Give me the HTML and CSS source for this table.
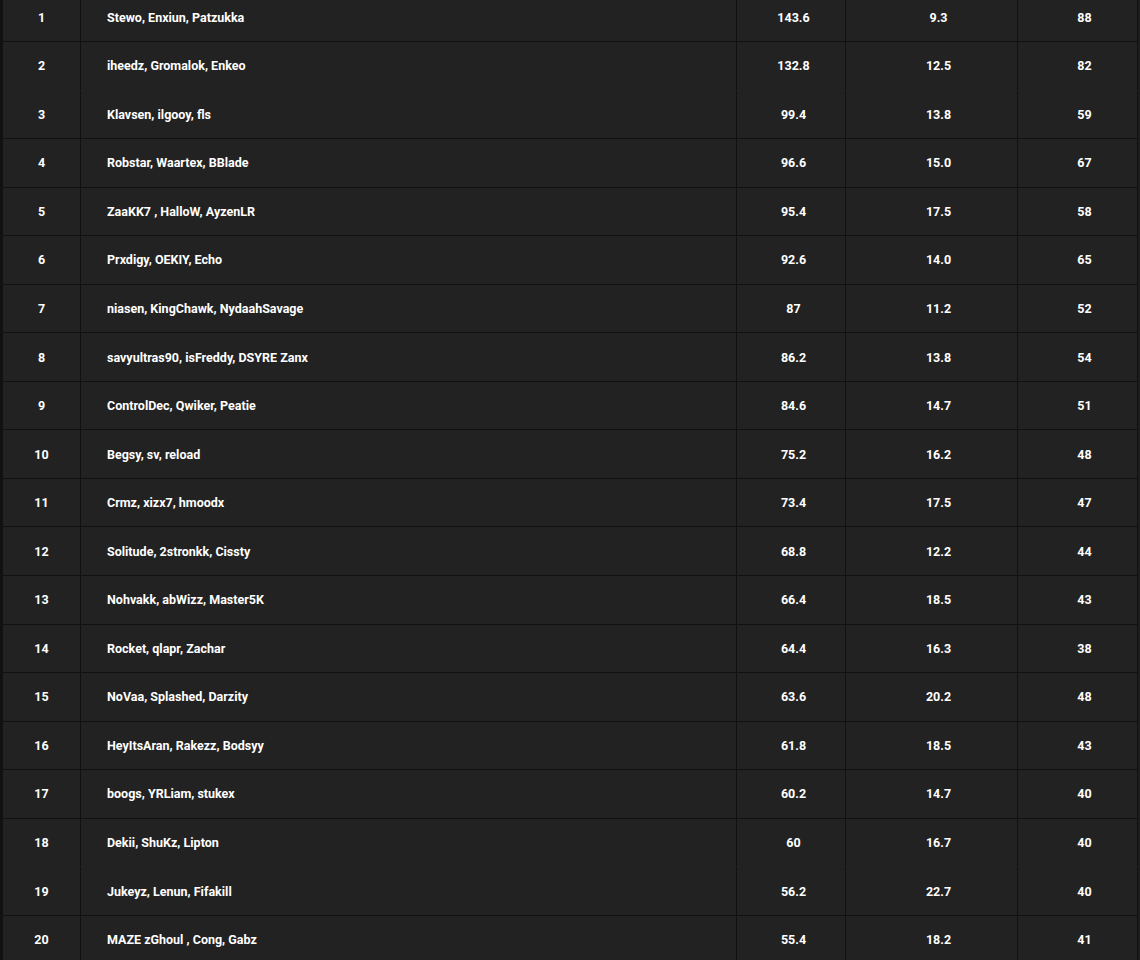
FILE: index.html
```html
<!DOCTYPE html>
<html>
<head>
<meta charset="utf-8">
<link rel="stylesheet" href="styles.css">
</head>
<body>
<div class="board">
  <div class="row"><div class="c rank">1</div><div class="c team">Stewo, Enxiun, Patzukka</div><div class="c pts">143.6</div><div class="c avg">9.3</div><div class="c elim">88</div></div>
  <div class="row noline"><div class="c rank">2</div><div class="c team">iheedz, Gromalok, Enkeo</div><div class="c pts">132.8</div><div class="c avg">12.5</div><div class="c elim">82</div></div>
  <div class="row"><div class="c rank">3</div><div class="c team">Klavsen, ilgooy, fls</div><div class="c pts">99.4</div><div class="c avg">13.8</div><div class="c elim">59</div></div>
  <div class="row"><div class="c rank">4</div><div class="c team">Robstar, Waartex, BBlade</div><div class="c pts">96.6</div><div class="c avg">15.0</div><div class="c elim">67</div></div>
  <div class="row"><div class="c rank">5</div><div class="c team">ZaaKK7 , HalloW, AyzenLR</div><div class="c pts">95.4</div><div class="c avg">17.5</div><div class="c elim">58</div></div>
  <div class="row"><div class="c rank">6</div><div class="c team">Prxdigy, OEKIY, Echo</div><div class="c pts">92.6</div><div class="c avg">14.0</div><div class="c elim">65</div></div>
  <div class="row"><div class="c rank">7</div><div class="c team">niasen, KingChawk, NydaahSavage</div><div class="c pts">87</div><div class="c avg">11.2</div><div class="c elim">52</div></div>
  <div class="row"><div class="c rank">8</div><div class="c team">savyultras90, isFreddy, DSYRE Zanx</div><div class="c pts">86.2</div><div class="c avg">13.8</div><div class="c elim">54</div></div>
  <div class="row"><div class="c rank">9</div><div class="c team">ControlDec, Qwiker, Peatie</div><div class="c pts">84.6</div><div class="c avg">14.7</div><div class="c elim">51</div></div>
  <div class="row"><div class="c rank">10</div><div class="c team">Begsy, sv, reload</div><div class="c pts">75.2</div><div class="c avg">16.2</div><div class="c elim">48</div></div>
  <div class="row"><div class="c rank">11</div><div class="c team">Crmz, xizx7, hmoodx</div><div class="c pts">73.4</div><div class="c avg">17.5</div><div class="c elim">47</div></div>
  <div class="row"><div class="c rank">12</div><div class="c team">Solitude, 2stronkk, Cissty</div><div class="c pts">68.8</div><div class="c avg">12.2</div><div class="c elim">44</div></div>
  <div class="row"><div class="c rank">13</div><div class="c team">Nohvakk, abWizz, Master5K</div><div class="c pts">66.4</div><div class="c avg">18.5</div><div class="c elim">43</div></div>
  <div class="row"><div class="c rank">14</div><div class="c team">Rocket, qlapr, Zachar</div><div class="c pts">64.4</div><div class="c avg">16.3</div><div class="c elim">38</div></div>
  <div class="row"><div class="c rank">15</div><div class="c team">NoVaa, Splashed, Darzity</div><div class="c pts">63.6</div><div class="c avg">20.2</div><div class="c elim">48</div></div>
  <div class="row"><div class="c rank">16</div><div class="c team">HeyItsAran, Rakezz, Bodsyy</div><div class="c pts">61.8</div><div class="c avg">18.5</div><div class="c elim">43</div></div>
  <div class="row"><div class="c rank">17</div><div class="c team">boogs, YRLiam, stukex</div><div class="c pts">60.2</div><div class="c avg">14.7</div><div class="c elim">40</div></div>
  <div class="row noline"><div class="c rank">18</div><div class="c team">Dekii, ShuKz, Lipton</div><div class="c pts">60</div><div class="c avg">16.7</div><div class="c elim">40</div></div>
  <div class="row"><div class="c rank">19</div><div class="c team">Jukeyz, Lenun, Fifakill</div><div class="c pts">56.2</div><div class="c avg">22.7</div><div class="c elim">40</div></div>
  <div class="row"><div class="c rank">20</div><div class="c team">MAZE zGhoul , Cong, Gabz</div><div class="c pts">55.4</div><div class="c avg">18.2</div><div class="c elim">41</div></div>
</div>
</body>
</html>
```

FILE: styles.css
```css
html, body {
  margin: 0;
  padding: 0;
  background: #1c1c1c;
  overflow: hidden;
}
body {
  font-family: Roboto, "Liberation Sans", Arial, sans-serif;
  font-size: 12.5px;
  font-weight: 700;
  color: #ffffff;
}
.board {
  width: 1138px;
  box-sizing: border-box;
  border-left: 3px solid #111111;
  margin-top: -6.56px;
  background: #222222;
}
.row {
  display: flex;
  height: 48.56px;
  box-sizing: border-box;
  border-bottom: 1px solid #111111;
}
.row.noline {
  border-bottom-color: #222222;
}
.c {
  display: flex;
  align-items: center;
  justify-content: center;
  box-sizing: border-box;
  border-right: 1px solid #111111;
  white-space: nowrap;
}
.rank { width: 78px; }
.team { width: 656px; justify-content: flex-start; padding-left: 26px; }
.pts { width: 109px; padding-left: 5px; }
.avg { width: 172px; padding-left: 14px; }
.elim { width: 120px; padding-left: 14px; }
```
